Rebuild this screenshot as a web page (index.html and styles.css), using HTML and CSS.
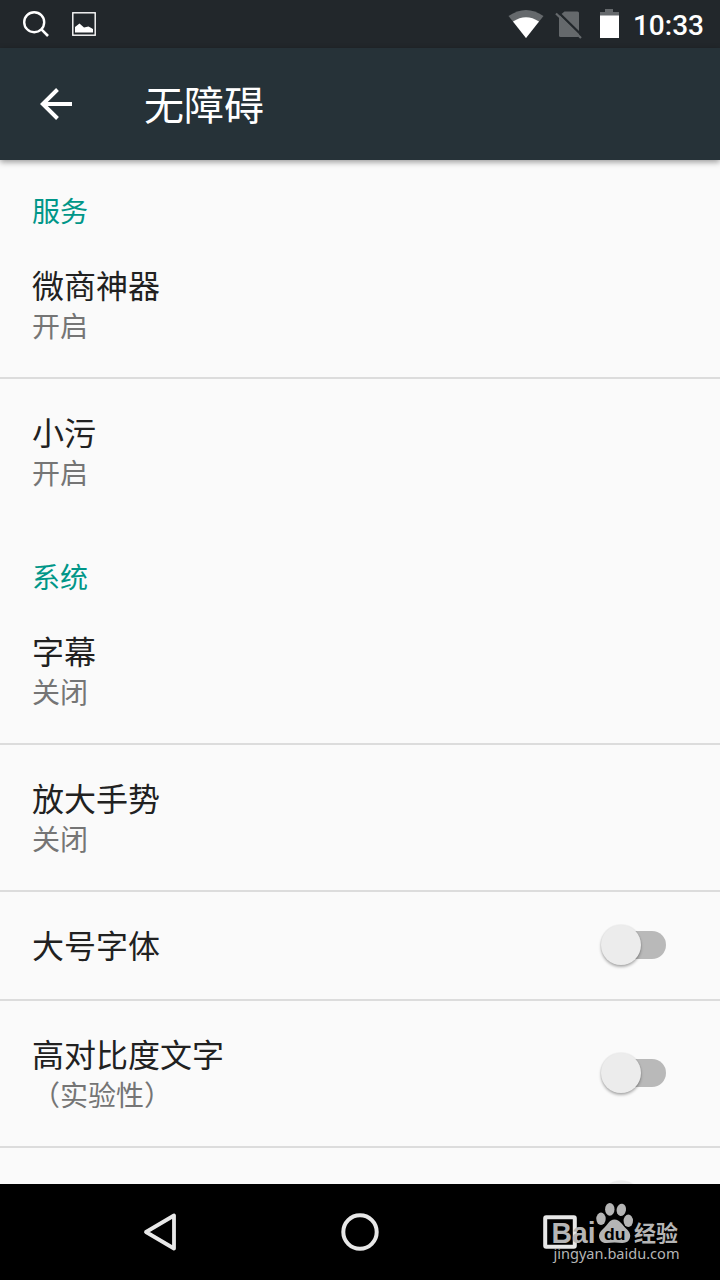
FILE: index.html
```html
<!DOCTYPE html>
<html lang="zh-CN">
<head>
    <meta charset="UTF-8">
    <meta name="viewport" content="width=device-width, initial-scale=1.0">
    <title>无障碍</title>
    <link rel="stylesheet" href="styles.css">
</head>
<body>
    <div class="status-bar">
        <svg class="status-left" width="100" height="48" viewBox="0 0 100 48">
            <circle cx="34.2" cy="22.2" r="10" fill="none" stroke="#fff" stroke-width="2.4"/>
            <path d="M41.2 29.2L48 36" stroke="#fff" stroke-width="2.6"/>
            <rect x="72.8" y="12.8" width="22.4" height="22.4" fill="none" stroke="#fff" stroke-width="1.4"/>
            <path d="M75 32.5V27L79.5 23.5L84 27.5L88.5 26.5L93 29V32.5Z" fill="#fff"/>
        </svg>
        <div class="status-right">
            <svg width="116" height="48" viewBox="0 0 116 48">
                <path d="M0.5 16Q18 3.8 35.5 16L18 38Z" fill="#65696c"/>
                <path d="M5 21.6Q18 13 31 21.6L18 38Z" fill="#fff"/>
                <path d="M56.5 11.5H69.5Q71 11.5 71 13V35.5Q71 37 69.5 37H52.5Q51 37 51 35.5V16Z" fill="#65696c"/>
                <path d="M50 12L74.5 36" stroke="#22272b" stroke-width="2.4"/>
                <path d="M48 13.5L73 38" stroke="#65696c" stroke-width="2.2"/>
                <path d="M97 9H105V12H111V16H92V12H97Z" fill="#65696c"/>
                <rect x="92" y="15.5" width="19" height="22.5" fill="#fff"/>
            </svg>
            <span class="time">10:33</span>
        </div>
    </div>

    <header class="app-bar">
        <svg class="back" width="32" height="32" viewBox="0 0 32 32">
            <path d="M17.5 1.5L2.8 16L17.5 30.5M3 16H32" fill="none" stroke="#fff" stroke-width="4"/>
        </svg>
        <h1>无障碍</h1>
    </header>

    <main class="settings">
        <h2>服务</h2>
        <div class="item">
            <div class="text">
                <div class="title">微商神器</div>
                <div class="summary">开启</div>
            </div>
        </div>
        <div class="item last">
            <div class="text">
                <div class="title">小污</div>
                <div class="summary">开启</div>
            </div>
        </div>

        <h2>系统</h2>
        <div class="item">
            <div class="text">
                <div class="title">字幕</div>
                <div class="summary">关闭</div>
            </div>
        </div>
        <div class="item">
            <div class="text">
                <div class="title">放大手势</div>
                <div class="summary">关闭</div>
            </div>
        </div>
        <div class="item single">
            <div class="title">大号字体</div>
            <div class="switch"><div class="thumb"></div></div>
        </div>
        <div class="item">
            <div class="text">
                <div class="title">高对比度文字</div>
                <div class="summary">（实验性）</div>
            </div>
            <div class="switch"><div class="thumb"></div></div>
        </div>
        <div class="item single">
            <div class="switch"><div class="thumb"></div></div>
        </div>
    </main>

    <nav class="nav-bar">
        <svg width="40" height="40" viewBox="0 0 40 40">
            <path d="M34 3.5V36.5L6 20Z" fill="none" stroke="#e8e8e8" stroke-width="3.8" stroke-linejoin="round"/>
        </svg>
        <svg width="40" height="40" viewBox="0 0 40 40">
            <circle cx="20" cy="20" r="16.7" fill="none" stroke="#e8e8e8" stroke-width="4"/>
        </svg>
        <svg width="40" height="40" viewBox="0 0 40 40">
            <rect x="5.2" y="5.2" width="29.6" height="29.6" rx="1" fill="none" stroke="#e8e8e8" stroke-width="4"/>
        </svg>
        <svg class="watermark" width="150" height="80" viewBox="0 0 150 80">
            <text class="wm-bai" x="11.5" y="48.5" textLength="44" lengthAdjust="spacingAndGlyphs">Bai</text>
            <g fill="#b5b5b5">
                <ellipse cx="61" cy="24.8" rx="4.7" ry="6.2"/>
                <ellipse cx="69.8" cy="15.3" rx="4.7" ry="6.4"/>
                <ellipse cx="81.3" cy="15.8" rx="4.7" ry="6.2" transform="rotate(10 81.3 15.8)"/>
                <ellipse cx="88.3" cy="26.8" rx="4.7" ry="6.2"/>
                <path d="M74.5 25.5C80 25.5 82 31 86 34.5C90 38 91.5 42 89 46C86 50.5 80 48.5 74.5 48.5C69 48.5 63.5 50.5 60.5 46.5C57.5 42 59.5 38 63 35C67.5 31.5 69 25.5 74.5 25.5Z"/>
            </g>
            <text class="wm-du" x="64" y="45.5" textLength="21.5" lengthAdjust="spacingAndGlyphs">du</text>
            <text class="wm-cn" x="94" y="46.5" textLength="44">经验</text>
            <text class="wm-url" x="13.5" y="65" textLength="126" lengthAdjust="spacingAndGlyphs">jingyan.baidu.com</text>
        </svg>
    </nav>
</body>
</html>
```

FILE: styles.css
```css
* {
    box-sizing: border-box;
}

body {
    margin: 0;
    width: 720px;
    height: 1280px;
    display: flex;
    flex-direction: column;
    overflow: hidden;
    background-color: #fafafa;
    font-family: Roboto, 'Noto Sans CJK SC', sans-serif;
}

svg {
    display: block;
    flex-shrink: 0;
}

.status-bar {
    height: 48px;
    flex-shrink: 0;
    display: flex;
    justify-content: space-between;
    background-color: #22272b;
}

.status-right {
    display: flex;
    align-items: center;
    padding-right: 16px;
}

.time {
    margin-left: 9px;
    color: #fff;
    font-size: 28px;
    font-weight: 500;
    line-height: 48px;
    padding-top: 3px;
}

.app-bar {
    position: relative;
    z-index: 1;
    height: 112px;
    flex-shrink: 0;
    display: flex;
    align-items: center;
    padding-left: 40px;
    gap: 72px;
    background-color: #263238;
    box-shadow: 0 2px 6px rgba(0, 0, 0, 0.4);
}

h1 {
    margin: 0;
    padding-top: 6px;
    color: #fff;
    font-size: 40px;
    font-weight: 400;
    line-height: 60px;
}

.settings {
    height: 1024px;
    overflow: hidden;
}

h2 {
    margin: 0;
    height: 72px;
    padding: 33px 32px 0;
    color: #009688;
    font-size: 28px;
    font-weight: 400;
    line-height: 39px;
}

.item {
    height: 147px;
    display: flex;
    align-items: center;
    justify-content: space-between;
    padding: 6px 54px 0 32px;
    border-bottom: 2px solid #dcdcdc;
}

.item.single {
    height: 109px;
    padding-top: 2px;
}

.item.last {
    border-color: transparent;
}

.title {
    color: #212121;
    font-size: 32px;
    line-height: 40px;
}

.summary {
    padding-top: 1px;
    color: #757575;
    font-size: 28px;
    line-height: 40px;
}

.switch {
    width: 60px;
    height: 28px;
    margin: -4px 0 0 auto;
    border-radius: 14px;
    background-color: #b9b9b9;
}

.item:not(.single) .switch {
    margin-top: -8px;
}

.thumb {
    width: 40px;
    height: 40px;
    margin: -6px 0 0 -5px;
    border-radius: 50%;
    background-color: #ececec;
    box-shadow: 0 2px 3px rgba(0, 0, 0, 0.3), 0 0 1px 1px rgba(0, 0, 0, 0.04);
}

.nav-bar {
    position: relative;
    height: 96px;
    flex-shrink: 0;
    display: flex;
    align-items: center;
    justify-content: center;
    gap: 160px;
    background-color: #000;
}

/* logo sits over the recents button */
.watermark {
    position: absolute;
    left: 540px;
    top: 10px;
}

.watermark text {
    fill: #b5b5b5;
}

.wm-bai {
    font: 700 29px 'Liberation Sans', sans-serif;
}

.watermark .wm-du {
    fill: #000;
    font: 700 17px 'Liberation Sans', sans-serif;
}

.wm-cn {
    font: 700 22px 'Noto Sans CJK SC', sans-serif;
}

.wm-url {
    font: 400 15px 'Noto Sans', sans-serif;
}
```
